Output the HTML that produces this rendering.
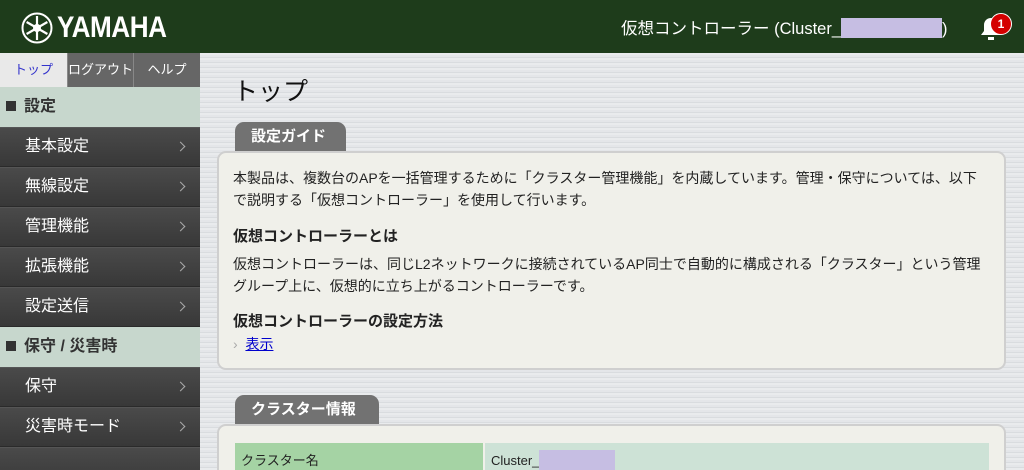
<!DOCTYPE html>
<html><head><meta charset="utf-8"><style>
*{margin:0;padding:0;box-sizing:border-box}
html{width:1024px;height:470px;overflow:hidden}
body{width:1024px;height:470px;overflow:hidden;font-family:"Liberation Sans","Noto Sans CJK JP",sans-serif;background:repeating-linear-gradient(180deg,#e4e6e9 0 2px,#d9dcdf 2px 3px,#e9ebed 3px 5px);position:relative}
.hdr{position:absolute;left:0;top:0;width:1024px;height:53px;background:#1e3c1b;color:#fff}
.logo{position:absolute;left:21px;top:11px;display:flex;align-items:center}
.logo span{font-weight:bold;font-size:30px;letter-spacing:-0.5px;margin-left:4px;transform:scaleX(0.87);transform-origin:left}
.ht{position:absolute;left:621px;top:15px;font-size:16.5px}
.ht b{display:inline-block;width:101px;height:20px;background:#c6bee3;vertical-align:-4px}
.bell{position:absolute;left:980px;top:16px}
.badge{position:absolute;left:990px;top:13px;width:22px;height:22px;border-radius:50%;background:#d40000;color:#fff;font-size:12px;font-weight:bold;text-align:center;line-height:21px;border:1px solid #fff}
.side{position:absolute;left:0;top:53px;width:200px;height:417px;background:#3a3a3a;overflow:hidden}
.tabs{display:flex;height:34px;font-size:13px;color:#fff}
.tabs div{text-align:center;line-height:33px;background:#666;border-left:1px solid #888}
.sec{height:40px;background:#c7d7cd;color:#333;font-weight:bold;font-size:16px;line-height:40px;padding-left:6px}
.sec i{display:inline-block;width:10px;height:10px;background:#333;margin-right:8px}
.it{height:40px;background:linear-gradient(#4a4a4a,#383838);border-bottom:1px solid #2a2a2a;border-top:1px solid #555;color:#fff;font-size:16px;line-height:38px;padding-left:25px;position:relative}
.it:after{content:"";position:absolute;right:16px;top:15px;width:6px;height:6px;border-top:1.5px solid #aaa;border-right:1.5px solid #aaa;transform:rotate(45deg)}
.it.e:after{display:none}
h1{position:absolute;left:233px;top:72px;font-size:25px;font-weight:normal;color:#111}
.tab{position:absolute;background:#727272;color:#fff;font-weight:bold;font-size:15px;border-radius:9px 9px 0 0;padding-left:16px;line-height:29px}
.pnl{position:absolute;left:217px;width:789px;background:#f0f0ea;border:2px solid #cfcfcf;border-radius:9px;font-size:14px;color:#222}
.pnl p{position:absolute;left:14px;line-height:22px}
</style></head><body>
<div class="hdr">
<div class="logo"><svg width="32" height="32" viewBox="0 0 32 32"><circle cx="16" cy="16" r="14.5" fill="none" stroke="#fff" stroke-width="2"/><g stroke="#fff" stroke-width="2.2"><line x1="16" y1="4" x2="16" y2="28"/><line x1="5.6" y1="10" x2="26.4" y2="22"/><line x1="5.6" y1="22" x2="26.4" y2="10"/></g><circle cx="16" cy="16" r="4" fill="#fff"/></svg><span>YAMAHA</span></div>
<div class="ht">仮想コントローラー (Cluster_<b></b>)</div>
<svg class="bell" width="22" height="26" viewBox="0 0 22 26"><path d="M11 2c-4 0-7 3-7 7v6l-3 4h20l-3-4V9c0-4-3-7-7-7z" fill="#fff"/><rect x="8" y="21" width="6" height="3" fill="#fff"/></svg>
<div class="badge">1</div>
</div>
<div class="side">
<div class="tabs"><div style="width:67px;background:#e9e9e9;color:#3333cc;border:0">トップ</div><div style="width:66px">ログアウト</div><div style="width:67px">ヘルプ</div></div>
<div class="sec"><i></i>設定</div>
<div class="it">基本設定</div><div class="it">無線設定</div><div class="it">管理機能</div><div class="it">拡張機能</div><div class="it">設定送信</div>
<div class="sec"><i></i>保守 / 災害時</div>
<div class="it">保守</div><div class="it">災害時モード</div><div class="it e"></div>
</div>
<h1>トップ</h1>
<div class="tab" style="left:235px;top:122px;width:111px;height:29px">設定ガイド</div>
<div class="pnl" style="top:151px;height:219px">
<p style="top:14px">本製品は、複数台のAPを一括管理するために「クラスター管理機能」を内蔵しています。管理・保守については、以下<br>で説明する「仮想コントローラー」を使用して行います。</p>
<p style="top:73px;font-weight:bold;font-size:15px">仮想コントローラーとは</p>
<p style="top:100px">仮想コントローラーは、同じL2ネットワークに接続されているAP同士で自動的に構成される「クラスター」という管理<br>グループ上に、仮想的に立ち上がるコントローラーです。</p>
<p style="top:158px;font-weight:bold;font-size:15px">仮想コントローラーの設定方法</p>
<p style="top:180px;color:#aaa">›&nbsp; <u style="color:#0000cc">表示</u></p>
</div>
<div class="tab" style="left:235px;top:395px;width:144px;height:29px">クラスター情報</div>
<div class="pnl" style="top:424px;height:60px">
<div style="position:absolute;left:16px;top:17px;width:248px;height:30px;background:#a5d3a4;padding:7px 6px;font-size:13px">クラスター名</div>
<div style="position:absolute;left:266px;top:17px;width:504px;height:30px;background:#cde2d6;padding:7px 6px;font-size:13px">Cluster_<span style="display:inline-block;width:76px;height:20px;background:#c6bee3;vertical-align:-5px"></span></div>
</div>
</body></html>
